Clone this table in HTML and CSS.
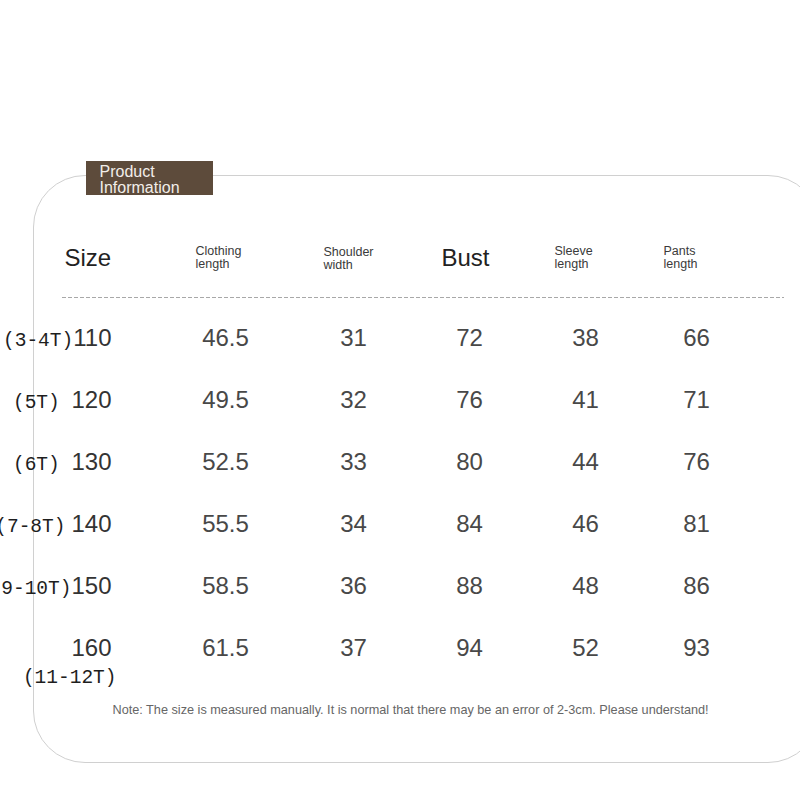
FILE: index.html
```html
<!DOCTYPE html>
<html>
<head>
<meta charset="utf-8">
<link rel="stylesheet" href="styles.css">
</head>
<body>
<div class="card">
  <div class="badge">Product<br>Information</div>
  <div class="head">
    <div class="h-big">Size</div>
    <div class="h-small">Clothing<br>length</div>
    <div class="h-small h-low">Shoulder<br>width</div>
    <div class="h-big">Bust</div>
    <div class="h-small">Sleeve<br>length</div>
    <div class="h-small">Pants<br>length</div>
  </div>
  <div class="dash"></div>
  <div class="rows">
    <div class="row">
      <div class="size"><span class="age">(3-4T)</span><span>110</span></div>
      <div class="val">46.5</div><div class="val">31</div><div class="val">72</div><div class="val">38</div><div class="val">66</div>
    </div>
    <div class="row">
      <div class="size"><span class="age">(5T) </span><span>120</span></div>
      <div class="val">49.5</div><div class="val">32</div><div class="val">76</div><div class="val">41</div><div class="val">71</div>
    </div>
    <div class="row">
      <div class="size"><span class="age">(6T) </span><span>130</span></div>
      <div class="val">52.5</div><div class="val">33</div><div class="val">80</div><div class="val">44</div><div class="val">76</div>
    </div>
    <div class="row">
      <div class="size"><span class="age age-gap">(7-8T)</span><span>140</span></div>
      <div class="val">55.5</div><div class="val">34</div><div class="val">84</div><div class="val">46</div><div class="val">81</div>
    </div>
    <div class="row">
      <div class="size"><span class="age">(9-10T)</span><span>150</span></div>
      <div class="val">58.5</div><div class="val">36</div><div class="val">88</div><div class="val">48</div><div class="val">86</div>
    </div>
    <div class="row row-last">
      <div class="size-stack">160<span class="age age-below">(11-12T)</span></div>
      <div class="val">61.5</div><div class="val">37</div><div class="val">94</div><div class="val">52</div><div class="val">93</div>
    </div>
  </div>
  <div class="note">Note: The size is measured manually. It is normal that there may be an error of 2-3cm. Please understand!</div>
</div>
</body>
</html>
```

FILE: styles.css
```css
html, body {
  margin: 0;
  padding: 0;
  background: #ffffff;
  overflow: hidden;
}

body {
  font-family: "Liberation Sans", Arial, sans-serif;
  width: 800px;
  height: 800px;
}

.card {
  position: relative;
  margin: 175px 0 0 33px;
  width: 787px;
  box-sizing: border-box;
  border: 1.5px solid #d0d0d0;
  border-radius: 52px;
  padding: 59.5px 0 45.5px 0;
}

.badge {
  position: absolute;
  left: 51.5px;
  top: -15.5px;
  width: 127px;
  height: 34px;
  box-sizing: border-box;
  background: #5d4b3b;
  color: #f2eee9;
  font-size: 16px;
  line-height: 16px;
  padding: 3px 0 0 14px;
  overflow: hidden;
  white-space: nowrap;
}

.head {
  display: grid;
  grid-template-columns: 131px 128px 118px 113px 109px auto;
  align-items: center;
  height: 44px;
  padding-left: 30.5px;
}

.h-big {
  font-size: 24px;
  color: #222222;
  line-height: 28px;
}

.h-small {
  font-size: 12.5px;
  line-height: 13px;
  color: #3a3a3a;
}

.h-low {
  padding-top: 2px;
}

.dash {
  height: 1px;
  margin: 17px 35.5px 0 27.5px;
  background-image: linear-gradient(to right, #a8a8a8 0 4px, transparent 4px 6px);
  background-size: 6px 1px;
}

.rows {
  margin: 9px 0 0 -34.5px;
}

.row {
  display: grid;
  grid-template-columns: 162px 128px 128px 104px 128px 94px;
  align-items: start;
  height: 62px;
}

.row-last {
  height: 71px;
}

.size {
  width: 112px;
  display: flex;
  justify-content: flex-end;
  align-items: baseline;
  font-size: 24px;
  line-height: 62px;
  color: #333333;
  white-space: nowrap;
}

.size-stack {
  width: 112px;
  text-align: right;
  font-size: 24px;
  line-height: 62px;
  color: #333333;
  white-space: nowrap;
}

.val {
  text-align: center;
  font-size: 24px;
  line-height: 62px;
  color: #484848;
}

.age {
  font-family: "Liberation Mono", "Courier New", monospace;
  font-size: 19.5px;
  color: #1e1e1e;
  white-space: pre;
  flex: none;
}

.age-gap {
  margin-right: 6px;
}

.age-below {
  display: block;
  line-height: 20px;
  margin-top: -11px;
  margin-right: -5px;
}

.note {
  margin-top: 15px;
  padding-left: 78.5px;
  font-size: 12.7px;
  line-height: 14px;
  color: #666666;
  white-space: nowrap;
}
```
